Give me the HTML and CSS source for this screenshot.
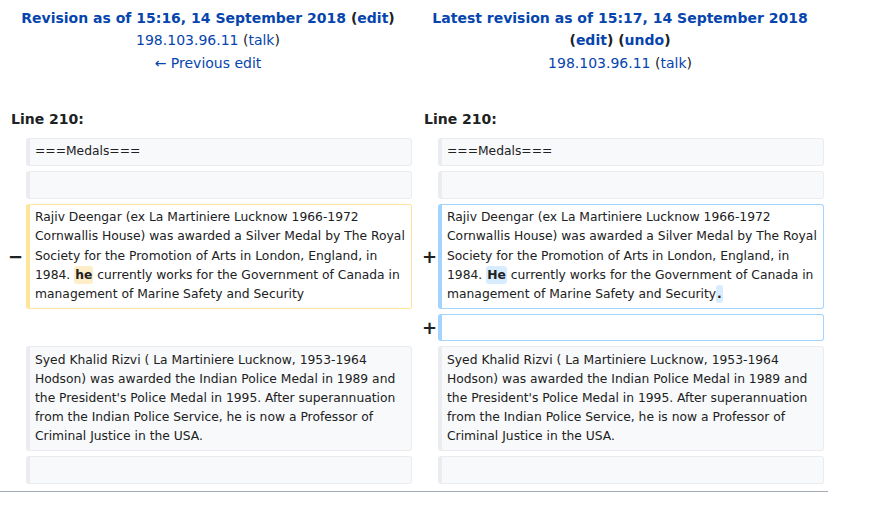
FILE: index.html
```html
<!DOCTYPE html>
<html>
<head>
<meta charset="utf-8">
<link rel="stylesheet" href="styles.css">
</head>
<body>
<table class="diff">
  <colgroup>
    <col class="col-marker"><col class="col-content"><col class="col-marker"><col class="col-content">
  </colgroup>
  <tr class="diff-title">
    <td colspan="2" class="diff-otitle">
      <div class="rev-title"><a href="#">Revision as of 15:16, 14 September 2018</a> <span class="paren">(<a href="#">edit</a>)</span></div>
      <div class="rev-user"><a href="#">198.103.96.11</a> <span class="paren-n">(<a href="#">talk</a>)</span></div>
      <div class="rev-nav"><a href="#">← Previous edit</a></div>
    </td>
    <td colspan="2" class="diff-ntitle">
      <div class="rev-title"><a href="#">Latest revision as of 15:17, 14 September 2018</a> <span class="paren">(<a href="#">edit</a>)</span> <span class="paren">(<a href="#">undo</a>)</span></div>
      <div class="rev-user"><a href="#">198.103.96.11</a> <span class="paren-n">(<a href="#">talk</a>)</span></div>
    </td>
  </tr>
  <tr>
    <td colspan="2" class="diff-lineno">Line 210:</td>
    <td colspan="2" class="diff-lineno">Line 210:</td>
  </tr>
  <tr>
    <td class="diff-marker"></td>
    <td class="diff-context"><div>===Medals===</div></td>
    <td class="diff-marker"></td>
    <td class="diff-context"><div>===Medals===</div></td>
  </tr>
  <tr>
    <td class="diff-marker"></td>
    <td class="diff-context"><br></td>
    <td class="diff-marker"></td>
    <td class="diff-context"><br></td>
  </tr>
  <tr>
    <td class="diff-marker"><span class="mk mk-del">−</span></td>
    <td class="diff-deletedline"><div>Rajiv Deengar (ex La Martiniere Lucknow 1966-1972 Cornwallis House) was awarded a Silver Medal by The Royal Society for the Promotion of Arts in London, England, in 1984. <del class="diffchange">he</del> currently works for the Government of Canada in management of Marine Safety and Security</div></td>
    <td class="diff-marker"><span class="mk mk-add">+</span></td>
    <td class="diff-addedline"><div>Rajiv Deengar (ex La Martiniere Lucknow 1966-1972 Cornwallis House) was awarded a Silver Medal by The Royal Society for the Promotion of Arts in London, England, in 1984. <ins class="diffchange">He</ins> currently works for the Government of Canada in management of Marine Safety and Security<ins class="diffchange">.</ins></div></td>
  </tr>
  <tr>
    <td colspan="2" class="diff-empty"></td>
    <td class="diff-marker"><span class="mk mk-add">+</span></td>
    <td class="diff-addedline"><br></td>
  </tr>
  <tr>
    <td class="diff-marker"></td>
    <td class="diff-context"><div>Syed Khalid Rizvi ( La Martiniere Lucknow, 1953-1964 Hodson) was awarded the Indian Police Medal in 1989 and the President's Police Medal in 1995. After superannuation from the Indian Police Service, he is now a Professor of Criminal Justice in the USA.</div></td>
    <td class="diff-marker"></td>
    <td class="diff-context"><div>Syed Khalid Rizvi ( La Martiniere Lucknow, 1953-1964 Hodson) was awarded the Indian Police Medal in 1989 and the President's Police Medal in 1995. After superannuation from the Indian Police Service, he is now a Professor of Criminal Justice in the USA.</div></td>
  </tr>
  <tr>
    <td class="diff-marker"></td>
    <td class="diff-context"><br></td>
    <td class="diff-marker"></td>
    <td class="diff-context"><br></td>
  </tr>
</table>
<hr class="diff-hr">
</body>
</html>
```
FILE: styles.css
```css
html, body {
  margin: 0;
  padding: 0;
  background: #fff;
  color: #202122;
  font-family: "DejaVu Sans", sans-serif;
}
a {
  color: #0645ad;
  text-decoration: none;
}
.diff {
  width: 828px;
  border-spacing: 4px 5px;
  table-layout: fixed;
  margin: 0;
}
.col-marker { width: 18px; }
.col-content { width: 386px; }
.diff td {
  padding: 0;
  vertical-align: top;
}
.diff-title td {
  text-align: center;
  font-size: 14px;
  line-height: 22.4px;
  padding-top: 2px;
}
.rev-title {
  font-weight: bold;
}
.paren { color: #202122; }
.diff-lineno {
  font-weight: bold;
  font-size: 14px;
  line-height: 20px;
  padding: 30px 0 4px 7px !important;
}
.diff-lineno + .diff-lineno {
  padding-left: 8px !important;
}
.diff .diff-marker {
  vertical-align: middle;
  text-align: right;
  font-weight: bold;
  font-size: 18px;
  line-height: 19px;
  color: #202122;
}
.mk-del { margin-right: -1px; }
.mk-add { margin-right: -3px; }
.diff-context, .diff-deletedline, .diff-addedline {
  font-size: 12.32px;
  line-height: 19.2px;
  border: 1px solid #eaecf0;
  border-left-width: 4px;
  border-radius: 3px;
  padding: 3.25px 6px 3.4px 5px !important;
  word-wrap: break-word;
}
.diff-context {
  background: #f8f9fa;
  color: #202122;
}
.diff-deletedline { border-color: #ffe49c; }
.diff-addedline { border-color: #a3d3ff; }
.diffchange {
  font-weight: bold;
  text-decoration: none;
  border-radius: 3px;
  padding: 2px 1px;
}
del.diffchange { background: #feeec8; }
ins.diffchange { background: #d8ecff; }
.diff-hr {
  width: 828px;
  margin: 2px 0 0 0;
  border: 0;
  border-top: 1px solid #a2a9b1;
  height: 0;
}
```
